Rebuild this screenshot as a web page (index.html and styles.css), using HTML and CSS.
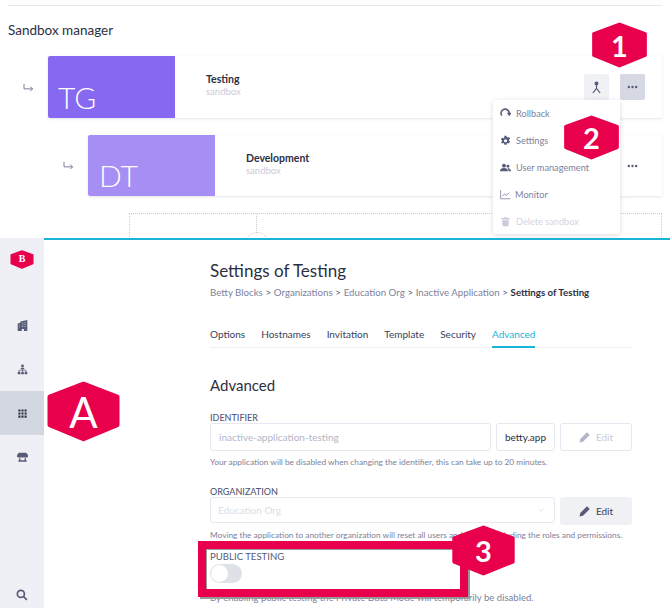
FILE: index.html
```html
<!DOCTYPE html>
<html>
<head>
    <meta charset="utf-8">
    <title>Sandbox manager</title>
    <link rel="stylesheet" href="styles.css">
</head>
<body>
    <svg class="defs" width="0" height="0">
        <defs>
            <path id="hex" d="M50 4 L95 22 V62 L50 82 L5 62 V22 Z"/>
            <path id="pencil" d="M1 23l1.500-7L16 2.500 21.500 8 8 21.500z"/>
            <g id="dots"><circle cx="2" cy="2" r="1.300"/><circle cx="6" cy="2" r="1.300"/><circle cx="10" cy="2" r="1.300"/></g>
        </defs>
    </svg>

    <section id="sandbox">
        <hr class="top-rule">
        <h2 class="sandbox-title">Sandbox manager</h2>

        <div class="sandbox-row row-testing">
            <svg class="row-arrow" viewBox="0 0 12 10"><path d="M1 1v5.500h9.500M8 4l2.500 2.500L8 9"/></svg>
            <div class="sandbox-card">
                <div class="thumb thumb-dark">TG</div>
                <div class="card-text">
                    <span class="card-name">Testing</span>
                    <span class="card-type">sandbox</span>
                </div>
                <div class="card-actions">
                    <button class="square-button">
                        <svg viewBox="0 0 12 14"><path d="M6 3.500V8M6 8L2 13M6 8l4 5"/><circle cx="6" cy="2.500" r="1.500"/></svg>
                    </button>
                    <button class="square-button is-open"><svg class="dots" viewBox="0 0 12 4"><use href="#dots"/></svg></button>
                </div>
            </div>
        </div>

        <div class="sandbox-row row-development">
            <svg class="row-arrow" viewBox="0 0 12 10"><path d="M1 1v5.500h9.500M8 4l2.500 2.500L8 9"/></svg>
            <div class="sandbox-card">
                <div class="thumb thumb-light">DT</div>
                <div class="card-text">
                    <span class="card-name">Development</span>
                    <span class="card-type">sandbox</span>
                </div>
                <div class="card-actions">
                    <span class="plain-dots"><svg class="dots" viewBox="0 0 12 4"><use href="#dots"/></svg></span>
                </div>
            </div>
        </div>

        <div class="new-sandbox">
            <div class="new-line"></div>
            <div class="new-circle"></div>
        </div>
    </section>

    <div id="page">
        <nav id="sidebar">
            <div class="side-logo">
                <svg viewBox="0 0 100 86" preserveAspectRatio="none"><use href="#hex"/></svg>
                <span>B</span>
            </div>
            <a class="side-item">
                <svg viewBox="0 0 16 16"><path d="M1 5l4-1V2l10-2v16h-5v-3H7v3H1z"/><path class="cut" d="M7.500 4.500h1.500M11 4h1.500M7.500 7h1.500M11 6.500h1.500M7.500 9.500h1.500M11 9.500h1.500M3 7.500h1M3 10h1"/></svg>
            </a>
            <a class="side-item">
                <svg viewBox="0 0 16 16"><circle cx="8" cy="2.800" r="2"/><path d="M5.500 5.500h5v2h-5zM1 13a2 2 0 0 1 4 0v2H1zM6 13a2 2 0 0 1 4 0v2H6zM11 13a2 2 0 0 1 4 0v2h-4z"/><path d="M3 11V9h10v2M8 7v4" class="wire"/></svg>
            </a>
            <a class="side-item is-active">
                <svg viewBox="0 0 16 16"><path d="M2 2h3v3H2zM6.500 2h3v3h-3zM11 2h3v3h-3zM2 6.500h3v3H2zM6.500 6.500h3v3h-3zM11 6.500h3v3h-3zM2 11h3v3H2zM6.500 11h3v3h-3zM11 11h3v3h-3z"/></svg>
            </a>
            <a class="side-item">
                <svg viewBox="0 0 16 16"><path d="M3 1h10c2 1 3 3 3 5a2 2 0 0 1-2 2H2a2 2 0 0 1-2-2c0-2 1-4 3-5z"/><path d="M3 9h2v3h6V9h2v3h1v2H2v-2h1z"/></svg>
            </a>
            <a class="side-item side-search">
                <svg viewBox="0 0 16 16"><circle class="wire-thick" cx="6.500" cy="6.500" r="4.700"/><path class="wire-thick" d="M10 10l4.500 4.500"/></svg>
            </a>
        </nav>

        <main id="settings">
            <h1 class="settings-title">Settings of Testing</h1>
            <div class="crumbs">
                <span>Betty Blocks</span><i>&gt;</i><span>Organizations</span><i>&gt;</i><span>Education Org</span><i>&gt;</i><span>Inactive Application</span><i>&gt;</i><b>Settings of Testing</b>
            </div>

            <div class="tabs">
                <a class="tab">Options</a>
                <a class="tab">Hostnames</a>
                <a class="tab">Invitation</a>
                <a class="tab">Template</a>
                <a class="tab">Security</a>
                <a class="tab is-active">Advanced</a>
            </div>

            <h2 class="section-title">Advanced</h2>

            <label class="field-label">IDENTIFIER</label>
            <div class="field-row">
                <div class="input input-grow placeholder">inactive-application-testing</div>
                <div class="input input-suffix">betty.app</div>
                <button class="edit-button is-disabled">
                    <svg viewBox="0 0 24 24"><use href="#pencil"/></svg>Edit
                </button>
            </div>
            <p class="help help-identifier">Your application will be disabled when changing the identifier, this can take up to 20 minutes.</p>

            <label class="field-label label-org">ORGANIZATION</label>
            <div class="field-row">
                <div class="input input-grow select placeholder-light">
                    Education Org
                    <svg viewBox="0 0 10 6"><path d="M1 1l4 4 4-4"/></svg>
                </div>
                <button class="edit-button">
                    <svg viewBox="0 0 24 24"><use href="#pencil"/></svg>Edit
                </button>
            </div>
            <p class="help help-org">Moving the application to another organization will reset all users and groups, including the roles and permissions.</p>

            <label class="field-label label-public">PUBLIC TESTING</label>
            <div class="toggle"><div class="toggle-knob"></div></div>
            <p class="help help-public">By enabling public testing the Private Data Mode will temporarily be disabled.</p>
        </main>
    </div>

    <!-- dropdown + annotations lie over the screenshots -->
    <div class="menu">
        <a class="menu-item">
            <svg viewBox="0 0 16 16"><path class="wire-thick" d="M2.500 11A6 6 0 1 1 13.500 8"/><path d="M10 7h7l-3.500 5z"/></svg>Rollback
        </a>
        <a class="menu-item">
            <svg viewBox="0 0 16 16"><path fill-rule="evenodd" d="M6.500 1h3l.4 2 1.300.7 1.900-.7 1.500 2.600-1.500 1.300v1.400l1.500 1.300-1.500 2.600-1.900-.7-1.300.7-.4 2h-3l-.4-2-1.300-.7-1.900.7L1.400 10.600l1.500-1.300V7.900L1.400 6.600l1.500-2.600 1.900.7 1.300-.7zM8 6a2.300 2.300 0 1 0 0 4.600A2.300 2.300 0 0 0 8 6z"/></svg>Settings
        </a>
        <a class="menu-item">
            <svg viewBox="0 0 18 16"><circle cx="6.500" cy="5" r="3.200"/><path d="M0 14c0-3 2.500-5 6.500-5s6.500 2 6.500 5z"/><circle cx="13" cy="6" r="2.300"/><path d="M12 9c3 0 6 1 6 5h-4c0-2-1-4-2-5z"/></svg>User management
        </a>
        <a class="menu-item item-monitor">
            <svg viewBox="0 0 18 16"><path class="wire" d="M1 1v14h16M3.500 11l4-4 3 2.500L15 5"/></svg>Monitor
        </a>
        <a class="menu-item is-disabled">
            <svg viewBox="0 0 16 16"><path d="M2 3h4l.5-1.500h3L10 3h4v2H2zM3 6h10l-.8 9H3.800z"/></svg>Delete sandbox
        </a>
    </div>

    <div class="red-frame"></div>

    <div class="hex hex-1"><svg viewBox="0 0 100 86" preserveAspectRatio="none"><use href="#hex"/></svg><span>1</span></div>
    <div class="hex hex-2"><svg viewBox="0 0 100 86" preserveAspectRatio="none"><use href="#hex"/></svg><span>2</span></div>
    <div class="hex hex-3"><svg viewBox="0 0 100 86" preserveAspectRatio="none"><use href="#hex"/></svg><span>3</span></div>
    <div class="hex hex-a"><svg viewBox="0 0 100 86" preserveAspectRatio="none"><use href="#hex"/></svg><span>A</span></div>
</body>
</html>
```

FILE: styles.css
```css
* {
    box-sizing: border-box;
}

html, body {
    height: 608px;
}

body {
    margin: 0;
    background: #fff;
    font-family: Lato, "Liberation Sans", sans-serif;
    color: #2c2f42;
    overflow: hidden;
    position: relative;
}

.defs {
    position: absolute;
}

/* sandbox manager part */
#sandbox {
    height: 238px;
    padding: 5px 8px 0;
    overflow: hidden;
}

.top-rule {
    margin: 0;
    border: none;
    border-top: 1px solid #e6e7f0;
}

.sandbox-title {
    margin: 15px 0 0;
    font-size: 13.500px;
    line-height: 18px;
    font-weight: 400;
}

.sandbox-row {
    display: flex;
    align-items: center;
}

.row-testing {
    margin-top: 17px;
    padding-left: 15px;
}

.row-development {
    margin-top: 17px;
    padding-left: 55px;
}

.row-arrow {
    width: 11px;
    height: 9px;
    margin-right: 14px;
    fill: none;
    stroke: #6d7290;
    stroke-width: 1;
    flex: none;
}

.sandbox-card {
    flex: 1;
    height: 62px;
    display: flex;
    align-items: center;
    background: #fff;
    box-shadow: 0 1px 3px rgba(90, 95, 130, 0.16);
    border-radius: 2px;
}

.row-development .sandbox-card {
    height: 61px;
}

.thumb {
    width: 127px;
    height: 100%;
    display: flex;
    align-items: flex-end;
    padding: 0 0 4px 10px;
    color: #fff;
    font-size: 30px;
    line-height: 34px;
    font-weight: 300;
    border-radius: 2px 0 0 2px;
}

.thumb-dark {
    background: #8768f0;
}

.thumb-light {
    background: #a68ef5;
    padding-left: 11px;
}

.card-text {
    display: flex;
    flex-direction: column;
    padding: 0 0 3px 31px;
}

.card-name {
    font-size: 10.500px;
    line-height: 13px;
    font-weight: 700;
}

.card-type {
    font-size: 9.500px;
    line-height: 12px;
    color: #c9cbd9;
}

.card-actions {
    margin-left: auto;
    padding-right: 17px;
    display: flex;
    gap: 11px;
    align-items: center;
}

.square-button {
    width: 25px;
    height: 26px;
    padding: 0;
    border: none;
    border-radius: 2px;
    background: #f0f1f5;
    display: flex;
    align-items: center;
    justify-content: center;
}

.square-button svg {
    width: 11px;
    height: 13px;
    fill: #565b78;
    stroke: #565b78;
    stroke-width: 1.300;
}

.square-button.is-open {
    background: #d6d9e3;
}

.square-button svg.dots,
.dots {
    width: 11px;
    height: 4px;
    fill: #565b78;
    stroke: none;
}

.plain-dots {
    width: 25px;
    display: flex;
    justify-content: center;
}

.new-sandbox {
    margin: 17px 0 0 121px;
    height: 40px;
    border: 1px dotted #c9cbd9;
    position: relative;
}

.new-line {
    width: 127px;
    height: 19px;
    border-right: 1px dotted #c9cbd9;
}

.new-circle {
    position: absolute;
    left: 115px;
    top: 18px;
    width: 24px;
    height: 24px;
    border: 1px dotted #c9cbd9;
    border-radius: 50%;
}

/* settings part */
#page {
    display: flex;
    height: 370px;
}

#sidebar {
    width: 44px;
    flex: none;
    background: #eff0f5;
    display: flex;
    flex-direction: column;
}

.side-logo {
    height: 65px;
    padding-top: 12px;
    position: relative;
}

.side-logo svg {
    display: block;
    width: 24px;
    height: 19px;
    margin: 0 auto;
    fill: #e8004c;
    stroke: #e8004c;
    stroke-width: 6;
    stroke-linejoin: round;
}

.side-logo span {
    position: absolute;
    top: 13px;
    left: 0;
    width: 100%;
    text-align: center;
    color: #fff;
    font: 700 10px/16px "Liberation Serif", serif;
}

.side-item {
    height: 44px;
    display: flex;
    align-items: center;
    justify-content: center;
}

.side-item svg {
    width: 11px;
    height: 11px;
    fill: #565b78;
}

.side-item.is-active {
    background: #d3d7e0;
}

.side-item.is-active svg {
    fill: #2c2f42;
}

.side-search {
    margin-top: auto;
    height: 26px;
}

.side-search svg {
    width: 12px;
    height: 12px;
}

.side-item .cut {
    stroke: #eff0f5;
    stroke-width: 1;
    fill: none;
}

.wire {
    fill: none;
    stroke: #565b78;
    stroke-width: 1;
}

.wire-thick {
    fill: none;
    stroke: #565b78;
    stroke-width: 2.300;
}

#settings {
    flex: 1;
    border-top: 2px solid #1bb3d8;
    padding: 20px 38px 0 166px;
    min-width: 0;
}

.settings-title {
    margin: 0;
    font-size: 17px;
    line-height: 22px;
    font-weight: 400;
}

.crumbs {
    margin-top: 3px;
    display: flex;
    align-items: center;
    font-size: 9.700px;
    line-height: 14px;
    color: #7d829b;
    white-space: nowrap;
}

.crumbs i {
    width: 11px;
    font-style: normal;
    text-align: center;
    color: #565b78;
}

.crumbs b {
    font-weight: 700;
    color: #2c2f42;
}

.tabs {
    display: flex;
    gap: 16px;
    margin-top: 22px;
    border-bottom: 1px solid #eeeff4;
    height: 27px;
}

.tab {
    font-size: 10px;
    line-height: 27px;
    color: #3c4056;
    height: 27px;
}

.tab.is-active {
    color: #1bb3d8;
    border-bottom: 2px solid #1bb3d8;
}

.section-title {
    margin: 27px 0 0;
    font-size: 15px;
    line-height: 20px;
    font-weight: 400;
}

.field-label {
    display: block;
    margin-top: 17px;
    font-size: 9px;
    line-height: 11px;
    font-weight: 500;
    color: #565b78;
}

.field-row {
    display: flex;
    gap: 5px;
}

.input {
    height: 28px;
    border: 1px solid #e6e7f0;
    border-radius: 3px;
    font-size: 10px;
    line-height: 26px;
    padding: 0 8px;
    white-space: nowrap;
}

.input-grow {
    flex: 1;
    min-width: 0;
}

.input-suffix {
    flex: none;
    width: 59px;
    padding: 0;
    text-align: center;
}

.placeholder {
    color: #b3b6c8;
}

.placeholder-light {
    color: #dcdde7;
}

.select {
    display: flex;
    justify-content: space-between;
    align-items: center;
    padding: 0 7px;
    height: 26px;
}

.select svg {
    width: 6px;
    height: 4px;
    fill: none;
    stroke: #c9cbd9;
    stroke-width: 1;
    margin-right: 3px;
}

.edit-button {
    width: 72px;
    height: 28px;
    flex: none;
    border: none;
    border-radius: 3px;
    background: #f0f1f5;
    font: inherit;
    font-size: 10px;
    color: #3c4056;
    display: flex;
    align-items: center;
    justify-content: center;
    gap: 5px;
}

.edit-button svg {
    width: 12px;
    height: 12px;
    fill: #565b78;
}

.edit-button.is-disabled {
    background: #fff;
    border: 1px solid #e6e7f0;
    color: #c9cbd9;
}

.edit-button.is-disabled svg {
    fill: #b3b6c8;
}

.help {
    margin: 0;
    font-size: 8.300px;
    line-height: 11px;
    color: #7d829b;
    white-space: nowrap;
}

.help-identifier {
    margin-top: 6px;
}

.label-org {
    margin-top: 18px;
}

.help-org {
    margin-top: 5px;
}

.label-public {
    margin-top: 10px;
    font-size: 9.600px;
    font-weight: 400;
}

.toggle {
    width: 32px;
    height: 19px;
    margin-top: 2px;
    border-radius: 10px;
    background: #dfe1e9;
    padding: 1px;
}

.toggle-knob {
    width: 17px;
    height: 17px;
    border-radius: 50%;
    background: #fff;
}

.help-public {
    margin-top: 9px;
    font-size: 9.550px;
}

/* overlays */
.menu {
    position: absolute;
    left: 493px;
    top: 100px;
    width: 127px;
    height: 134px;
    background: #fff;
    border-radius: 3px;
    box-shadow: 0 1px 5px rgba(90, 95, 130, 0.22);
    padding: 0 7px;
}

.menu-item {
    height: 27px;
    padding-bottom: 1px;
    display: flex;
    align-items: center;
    gap: 5px;
    font-size: 9.200px;
    color: #7d829b;
    white-space: nowrap;
}

.menu-item svg {
    width: 11px;
    height: 11px;
    fill: #565b78;
    flex: none;
}

.item-monitor svg {
    margin-right: -1px;
}

.menu-item.is-disabled {
    color: #d3d5e1;
}

.menu-item.is-disabled svg {
    fill: #c9cbd9;
}

.red-frame {
    position: absolute;
    left: 198px;
    top: 541px;
    width: 270px;
    height: 56px;
    border: 8px solid #e8004c;
    box-shadow: inset 1px 1px 0 #999, 2px 2px 0 #999;
}

.hex {
    position: absolute;
    display: flex;
    align-items: center;
    justify-content: center;
}

.hex svg {
    position: absolute;
    inset: 0;
    width: 100%;
    height: 100%;
    fill: #e8004c;
    stroke: #e8004c;
    stroke-width: 6;
    stroke-linejoin: round;
}

.hex span {
    position: relative;
    color: #fff;
    font-weight: 700;
    font-size: 29px;
}

.hex-1 {
    left: 591px;
    top: 22px;
    width: 57px;
    height: 46px;
}

.hex-2 {
    left: 563px;
    top: 115px;
    width: 57px;
    height: 45px;
}

.hex-3 {
    left: 451px;
    top: 525px;
    width: 65px;
    height: 51px;
}

.hex-a {
    left: 46px;
    top: 381px;
    width: 75px;
    height: 61px;
}

.hex-a span {
    font-size: 42px;
    font-weight: 400;
}
```
